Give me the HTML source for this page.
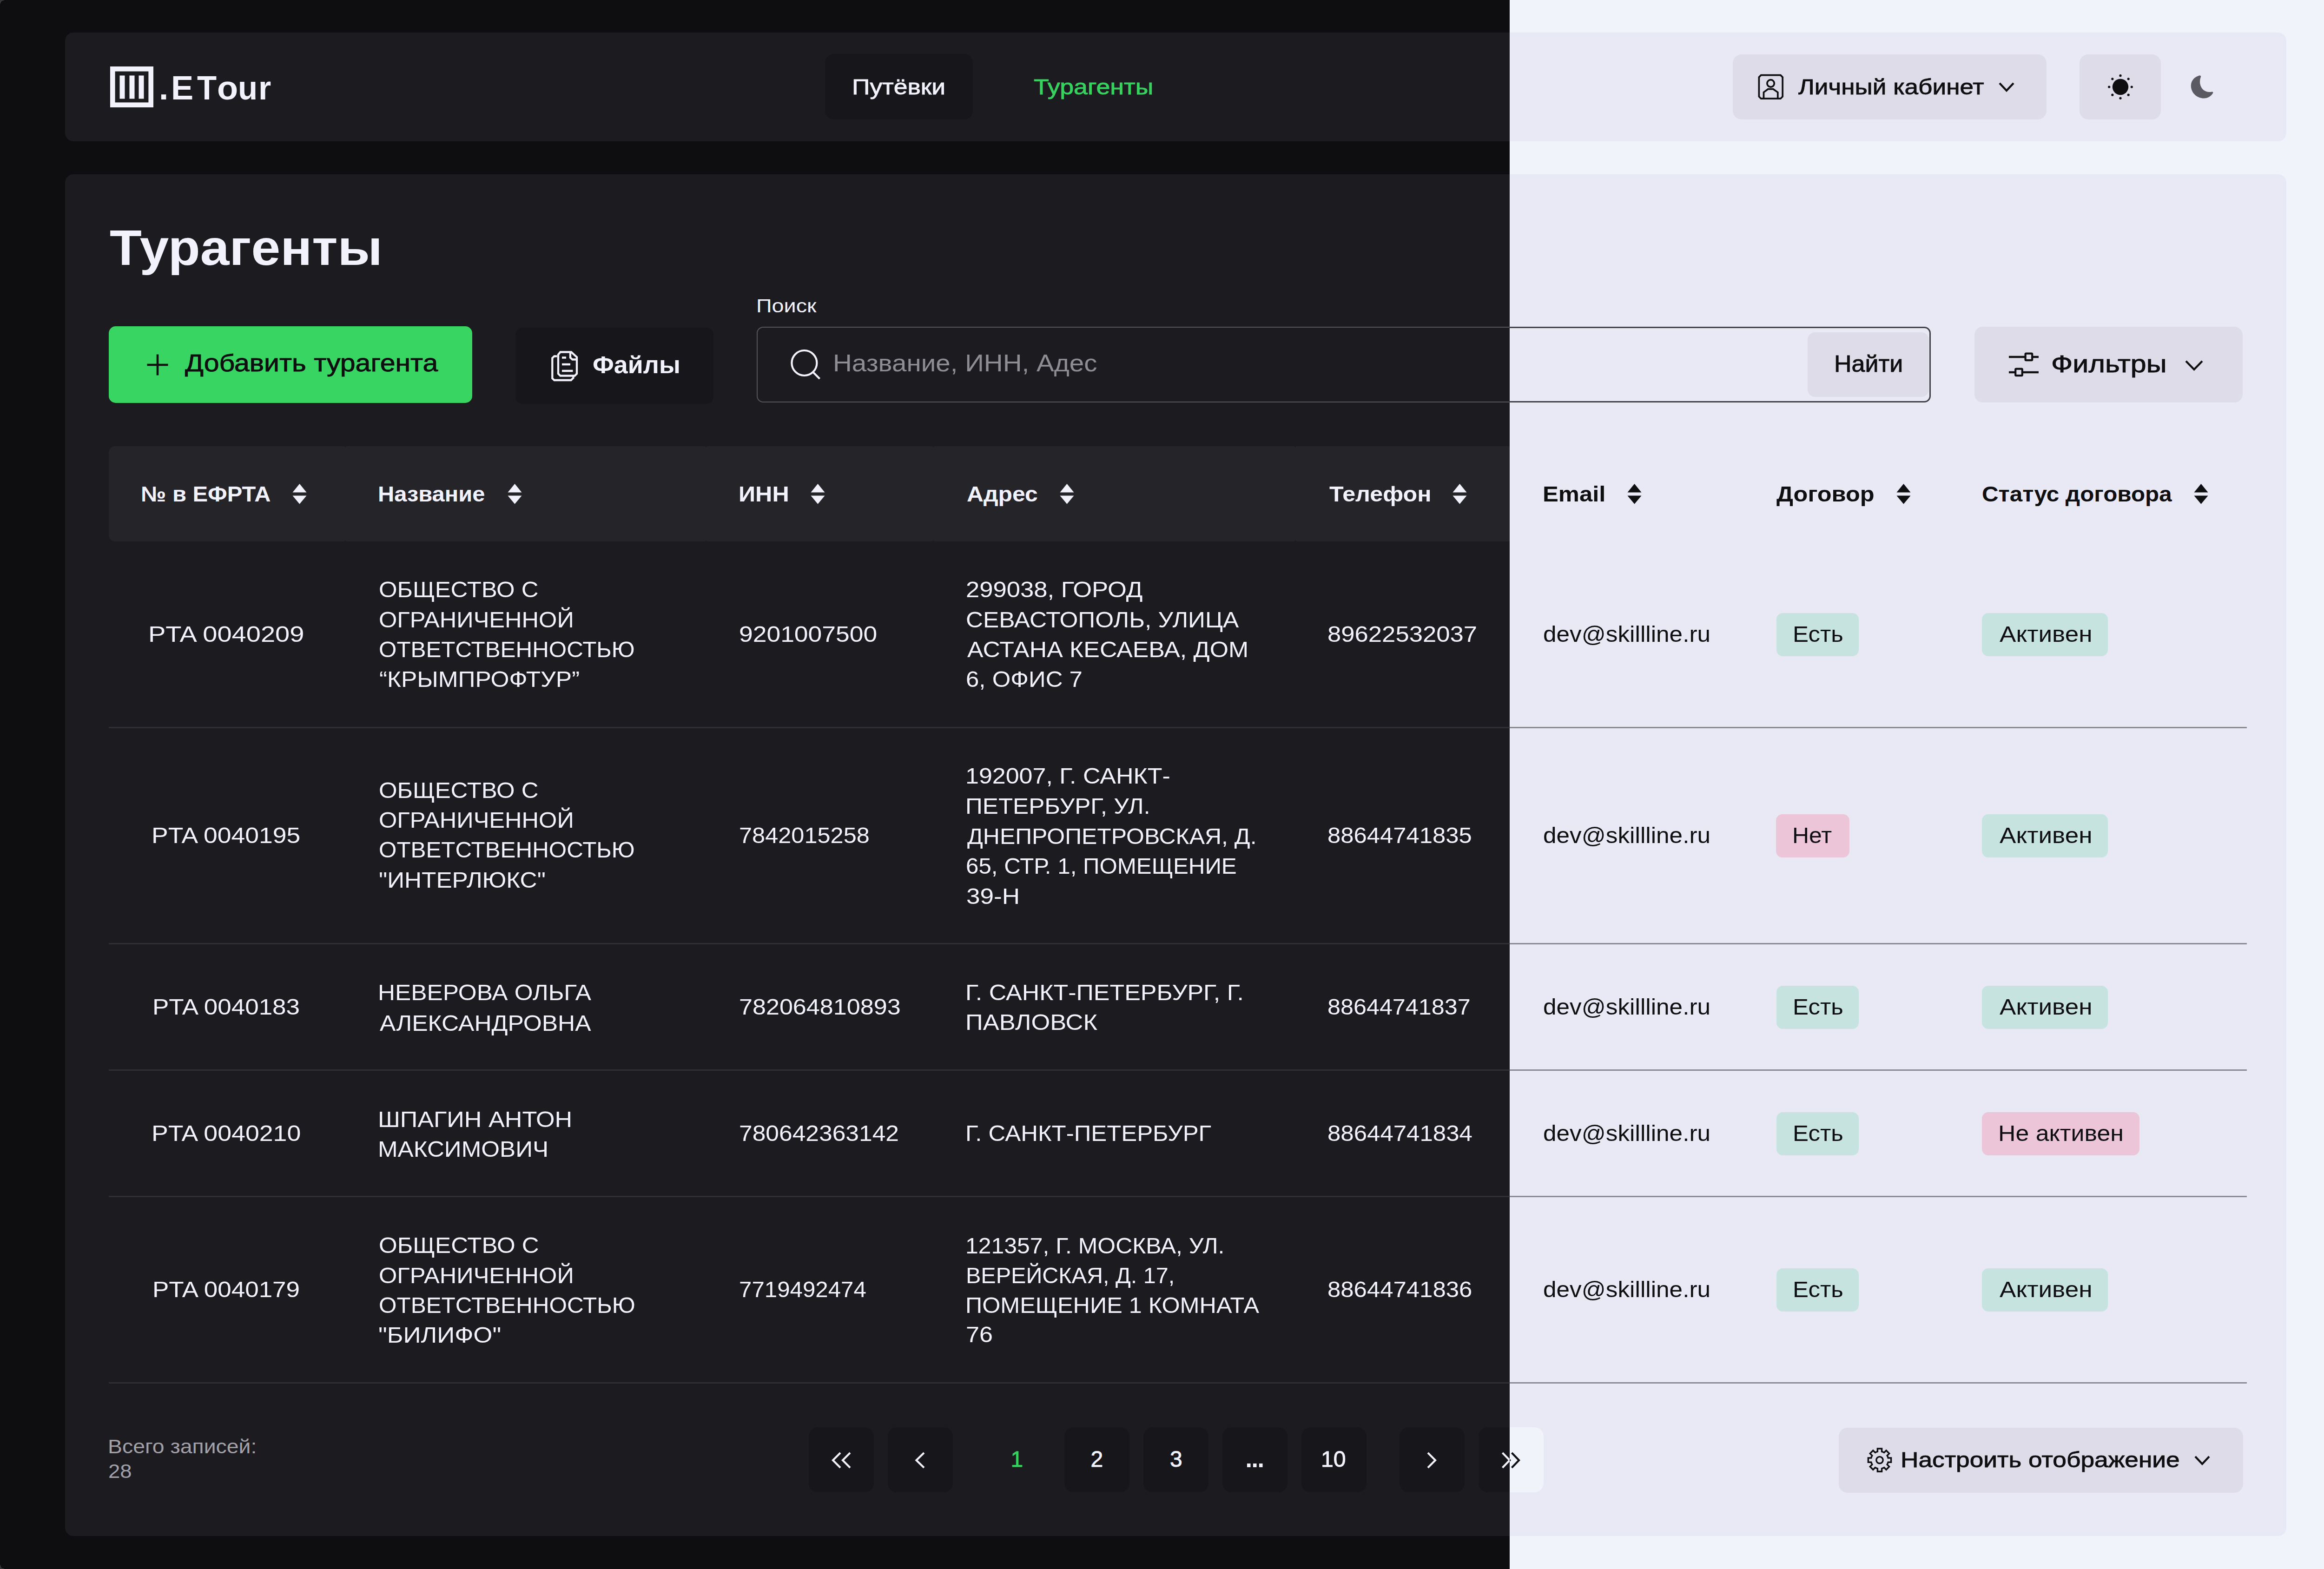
<!DOCTYPE html>
<html lang="ru"><head><meta charset="utf-8"><title>Турагенты</title>
<style>
*{margin:0;padding:0;box-sizing:content-box}
html,body{width:5060px;height:3376px;overflow:hidden;background:#333437}
.layer{position:absolute;left:0;top:0;width:5060px;height:3376px;background:var(--page);border-radius:9px;overflow:hidden;font-family:"Liberation Sans",sans-serif}
.t{position:absolute;white-space:pre;line-height:1;transform-origin:0 0;font-family:"Liberation Sans",sans-serif}
.r{position:absolute;display:block}
.dark{--ibw:2.4px;--page:#0e0e10;--card:#1c1b20;--btn:#17161b;--btn2:#17161b;--thead:#252429;--fg:#f1f2fb;--muted:#a2a1a8;--ph:#8e8d94;--div:#2f2e34;--inputborder:#56555c;--green:#38d15f;--greenbtn:#38d562;--ontext:#0e0e10;--pgbtn:#17161b;--okbg:#1f3b37;--nobg:#3b1f2c;--moon:#5b5a61}
.light{--ibw:3px;--page:#f1f3fb;--card:#e9e8f5;--btn:#dddce8;--btn2:#dddce8;--thead:transparent;--fg:#0f0f12;--muted:#6c6b72;--ph:#8e8d94;--div:#8b8a92;--inputborder:#403f46;--green:#2fb552;--greenbtn:#38d562;--ontext:#0e0e10;--pgbtn:#f1f3fb;--okbg:#c7e3e0;--nobg:#ecc5d8;--moon:#5b5a61}
</style></head>
<body>
<div class="layer light">
<div class='r' style='left:140px;top:70px;width:4779px;height:234px;background:var(--card);border-radius:18px;'></div>
<svg class='r' style='left:237px;top:143px;' width='94' height='89' viewBox='0 0 94 89'><rect x='5.3' y='5.3' width='82.4' height='77.4' fill='none' stroke='var(--fg)' stroke-width='10.6'/><rect x='20.5' y='19.5' width='11' height='50' fill='var(--fg)'/><rect x='41.5' y='19.5' width='11' height='50' fill='var(--fg)'/><rect x='61.5' y='19.5' width='11' height='50' fill='var(--fg)'/></svg>
<div class='t' style='left:342.0px;top:152.2px;font-size:73px;font-weight:700;color:var(--fg);'>.</div>
<div class='t' style='left:368.0px;top:152.2px;font-size:73px;font-weight:700;color:var(--fg);transform:scaleX(0.9881);'>E</div>
<div class='t' style='left:424.0px;top:152.2px;font-size:73px;font-weight:700;color:var(--fg);transform:scaleX(0.9432);'>T</div>
<div class='t' style='left:466.5px;top:152.2px;font-size:73px;font-weight:700;color:var(--fg);transform:scaleX(1.0125);'>o</div>
<div class='t' style='left:512.2px;top:152.2px;font-size:73px;font-weight:700;color:var(--fg);transform:scaleX(0.9444);'>u</div>
<div class='t' style='left:556.2px;top:152.2px;font-size:73px;font-weight:700;color:var(--fg);transform:scaleX(0.9583);'>r</div>
<div class='r' style='left:1775px;top:116px;width:318px;height:141px;background:var(--btn);border-radius:19px;'></div>
<div class='t' style='left:1832.6px;top:163.2px;font-size:47px;font-weight:400;color:var(--fg);-webkit-text-stroke:0.9px var(--fg);transform:scaleX(1.1380);'>Путёвки</div>
<div class='t' style='left:2223.9px;top:163.2px;font-size:47px;font-weight:400;color:var(--green);-webkit-text-stroke:0.9px var(--green);transform:scaleX(1.1445);'>Турагенты</div>
<div class='r' style='left:3728px;top:117px;width:675px;height:140px;background:var(--btn2);border-radius:19px;'></div>
<svg class='r' style='left:3770px;top:145px;' width='80' height='80' viewBox='0 0 80 80'><path d='M18.8 16.7 L60.8 16.7 L65.2 21.1 L65.2 62.8 L60.8 67.2 L18.8 67.2 L14.4 62.8 L14.4 21.1 Z' fill='none' stroke='var(--fg)' stroke-width='3.7'/><circle cx='39.6' cy='34.4' r='7.7' fill='none' stroke='var(--fg)' stroke-width='3.7'/><path d='M24.5 66 L24.5 53.6 L33.9 46.7 L44.9 46.7 L54.8 53.6 L54.8 66' fill='none' stroke='var(--fg)' stroke-width='3.7'/></svg>
<div class='t' style='left:3869.0px;top:163.2px;font-size:47px;font-weight:400;color:var(--fg);-webkit-text-stroke:0.9px var(--fg);transform:scaleX(1.1301);'>Личный кабинет</div>
<svg class='r' style='left:4300px;top:177px;' width='34' height='21' viewBox='0 0 34 21'><path d='M2 2 L17.0 18 L32 2' fill='none' stroke='var(--fg)' stroke-width='4.2' stroke-linecap='butt' stroke-linejoin='miter'/></svg>
<div class='r' style='left:4474px;top:117px;width:175px;height:140px;background:var(--btn2);border-radius:19px;'></div>
<svg class='r' style='left:4518px;top:143px;' width='88' height='88' viewBox='0 0 88 88'><circle cx='44' cy='44' r='17.2' fill='var(--fg)'/><circle cx='68.30' cy='44.00' r='2.6' fill='var(--fg)'/><circle cx='61.18' cy='61.18' r='2.6' fill='var(--fg)'/><circle cx='44.00' cy='68.30' r='2.6' fill='var(--fg)'/><circle cx='26.82' cy='61.18' r='2.6' fill='var(--fg)'/><circle cx='19.70' cy='44.00' r='2.6' fill='var(--fg)'/><circle cx='26.82' cy='26.82' r='2.6' fill='var(--fg)'/><circle cx='44.00' cy='19.70' r='2.6' fill='var(--fg)'/><circle cx='61.18' cy='26.82' r='2.6' fill='var(--fg)'/></svg>
<svg class='r' style='left:4706px;top:155px;' width='64' height='64' viewBox='0 0 64 64'><path d='M 24.5 8 C 12 12 6.5 22 8 33 C 10 47 22 56.5 35.5 56.5 C 44 56.5 51 52 55 45.5 C 56 43.5 55 42 52.5 42.5 C 40 45 30 38 27.5 26 C 26.5 20 27.5 14 29 10.5 C 30 8 27.5 7 24.5 8 Z' fill='var(--moon)'/></svg>
<div class='r' style='left:140px;top:375px;width:4779px;height:2930px;background:var(--card);border-radius:18px;'></div>
<div class='t' style='left:235.9px;top:479.9px;font-size:107px;font-weight:700;color:var(--fg);transform:scaleX(1.0541);'>Турагенты</div>
<div class='r' style='left:234px;top:702px;width:782px;height:165px;background:var(--greenbtn);border-radius:15px;'></div>
<svg class='r' style='left:314px;top:760px;' width='50' height='50' viewBox='0 0 50 50'><path d='M25 2.5 V47.5 M2.5 25 H47.5' stroke='var(--ontext)' stroke-width='4.6'/></svg>
<div class='t' style='left:398.0px;top:756.3px;font-size:51px;font-weight:400;color:var(--ontext);-webkit-text-stroke:0.9px var(--ontext);transform:scaleX(1.1573);'>Добавить турагента</div>
<div class='r' style='left:1109px;top:705px;width:426px;height:164px;background:var(--btn);border-radius:15px;'></div>
<svg class='r' style='left:1170px;top:740px;' width='90' height='90' viewBox='0 0 90 90'><path d='M31 23 L35.5 17.5 L59 17.5 L71 28.5 L71 64 L66.5 68.5 L35.5 68.5 L31 64 Z' fill='none' stroke='var(--fg)' stroke-width='4.3' stroke-linejoin='miter'/><path d='M57 17.5 L57 29.5 L61.5 33.5 L71 33.5' fill='none' stroke='var(--fg)' stroke-width='4.3'/><path d='M39 29.5 H48 M39 44 H57 M39 58 H62.5' stroke='var(--fg)' stroke-width='4.3'/><path d='M28.5 26.5 L22.5 26.5 L18.3 30.5 L18.3 74 L22.5 78 L58.5 78 L63.5 73 L63.5 69' fill='none' stroke='var(--fg)' stroke-width='4.3'/></svg>
<div class='t' style='left:1274.9px;top:759.8px;font-size:51px;font-weight:700;color:var(--fg);transform:scaleX(1.0536);'>Файлы</div>
<div class='t' style='left:1626.5px;top:637.6px;font-size:40px;font-weight:400;color:var(--fg);transform:scaleX(1.1685);'>Поиск</div>
<div class='r' style='left:1628px;top:703px;width:2526px;height:163px;background:transparent;border-radius:14px;box-sizing:border-box;border:var(--ibw) solid var(--inputborder);'></div>
<svg class='r' style='left:1695px;top:745px;' width='80' height='80' viewBox='0 0 80 80'><circle cx='35.4' cy='36' r='27' fill='none' stroke='var(--fg)' stroke-width='4.2'/><path d='M54.5 56 L68.5 70' stroke='var(--fg)' stroke-width='4.2'/></svg>
<div class='t' style='left:1791.6px;top:755.2px;font-size:52px;font-weight:400;color:var(--ph);transform:scaleX(1.0877);'>Название, ИНН, Адес</div>
<div class='r' style='left:3889px;top:715px;width:261px;height:139px;background:var(--btn2);border-radius:16px;'></div>
<div class='t' style='left:3945.8px;top:758.4px;font-size:50px;font-weight:400;color:var(--fg);-webkit-text-stroke:0.9px var(--fg);transform:scaleX(1.0387);'>Найти</div>
<div class='r' style='left:4248px;top:703px;width:577px;height:163px;background:var(--btn2);border-radius:18px;'></div>
<svg class='r' style='left:4310px;top:740px;' width='90' height='90' viewBox='0 0 90 90'><path d='M12 28 H47 M63 28 H76 M12 61 H25 M42 61 H76' stroke='var(--fg)' stroke-width='4.4'/><rect x='47.6' y='20.6' width='14.6' height='14.6' rx='1.5' fill='none' stroke='var(--fg)' stroke-width='4.2'/><rect x='26.2' y='53.6' width='14.6' height='14.6' rx='1.5' fill='none' stroke='var(--fg)' stroke-width='4.2'/></svg>
<div class='t' style='left:4412.6px;top:757.5px;font-size:51px;font-weight:400;color:var(--fg);-webkit-text-stroke:0.9px var(--fg);transform:scaleX(1.1951);'>Фильтры</div>
<svg class='r' style='left:4701px;top:775px;' width='39' height='23' viewBox='0 0 39 23'><path d='M2 2 L19.5 20 L37 2' fill='none' stroke='var(--fg)' stroke-width='4.2' stroke-linecap='butt' stroke-linejoin='miter'/></svg>
<div class='r' style='left:234px;top:960px;width:509px;height:205px;background:var(--thead);border-radius:14px 4px 4px 14px'></div>
<div class='r' style='left:743px;top:960px;width:776px;height:205px;background:var(--thead);border-radius:4px'></div>
<div class='r' style='left:1519px;top:960px;width:489px;height:205px;background:var(--thead);border-radius:4px'></div>
<div class='r' style='left:2008px;top:960px;width:779px;height:205px;background:var(--thead);border-radius:4px'></div>
<div class='r' style='left:2787px;top:960px;width:462px;height:205px;background:var(--thead);border-radius:4px'></div>
<div class='r' style='left:3249px;top:960px;width:500px;height:205px;background:var(--thead);border-radius:4px'></div>
<div class='r' style='left:3749px;top:960px;width:443px;height:205px;background:var(--thead);border-radius:4px'></div>
<div class='r' style='left:4192px;top:960px;width:642px;height:205px;background:var(--thead);border-radius:4px'></div>
<div class='t' style='left:302.8px;top:1039.6px;font-size:46px;font-weight:700;color:var(--fg);transform:scaleX(1.0604);'>№ в ЕФРТА</div>
<svg class='r' style='left:629px;top:1041px;' width='31' height='44' viewBox='0 0 31 44'><path d='M15.5 0 L30.5 18.5 L0.5 18.5 Z' fill='var(--fg)'/><path d='M0.5 25.5 L30.5 25.5 L15.5 43.5 Z' fill='var(--fg)'/></svg>
<div class='t' style='left:813.4px;top:1039.6px;font-size:46px;font-weight:700;color:var(--fg);transform:scaleX(1.0611);'>Название</div>
<svg class='r' style='left:1092px;top:1041px;' width='31' height='44' viewBox='0 0 31 44'><path d='M15.5 0 L30.5 18.5 L0.5 18.5 Z' fill='var(--fg)'/><path d='M0.5 25.5 L30.5 25.5 L15.5 43.5 Z' fill='var(--fg)'/></svg>
<div class='t' style='left:1588.7px;top:1039.6px;font-size:46px;font-weight:700;color:var(--fg);transform:scaleX(1.0925);'>ИНН</div>
<svg class='r' style='left:1743.6px;top:1041px;' width='31' height='44' viewBox='0 0 31 44'><path d='M15.5 0 L30.5 18.5 L0.5 18.5 Z' fill='var(--fg)'/><path d='M0.5 25.5 L30.5 25.5 L15.5 43.5 Z' fill='var(--fg)'/></svg>
<div class='t' style='left:2079.5px;top:1039.6px;font-size:46px;font-weight:700;color:var(--fg);transform:scaleX(1.0825);'>Адрес</div>
<svg class='r' style='left:2279.7px;top:1041px;' width='31' height='44' viewBox='0 0 31 44'><path d='M15.5 0 L30.5 18.5 L0.5 18.5 Z' fill='var(--fg)'/><path d='M0.5 25.5 L30.5 25.5 L15.5 43.5 Z' fill='var(--fg)'/></svg>
<div class='t' style='left:2859.5px;top:1039.6px;font-size:46px;font-weight:700;color:var(--fg);transform:scaleX(1.0916);'>Телефон</div>
<svg class='r' style='left:3125px;top:1041px;' width='31' height='44' viewBox='0 0 31 44'><path d='M15.5 0 L30.5 18.5 L0.5 18.5 Z' fill='var(--fg)'/><path d='M0.5 25.5 L30.5 25.5 L15.5 43.5 Z' fill='var(--fg)'/></svg>
<div class='t' style='left:3318.7px;top:1039.6px;font-size:46px;font-weight:700;color:var(--fg);transform:scaleX(1.1031);'>Email</div>
<svg class='r' style='left:3500.5px;top:1041px;' width='31' height='44' viewBox='0 0 31 44'><path d='M15.5 0 L30.5 18.5 L0.5 18.5 Z' fill='var(--fg)'/><path d='M0.5 25.5 L30.5 25.5 L15.5 43.5 Z' fill='var(--fg)'/></svg>
<div class='t' style='left:3821.6px;top:1039.6px;font-size:46px;font-weight:700;color:var(--fg);transform:scaleX(1.0972);'>Договор</div>
<svg class='r' style='left:4080px;top:1041px;' width='31' height='44' viewBox='0 0 31 44'><path d='M15.5 0 L30.5 18.5 L0.5 18.5 Z' fill='var(--fg)'/><path d='M0.5 25.5 L30.5 25.5 L15.5 43.5 Z' fill='var(--fg)'/></svg>
<div class='t' style='left:4263.9px;top:1039.6px;font-size:46px;font-weight:700;color:var(--fg);transform:scaleX(1.0719);'>Статус договора</div>
<svg class='r' style='left:4720px;top:1041px;' width='31' height='44' viewBox='0 0 31 44'><path d='M15.5 0 L30.5 18.5 L0.5 18.5 Z' fill='var(--fg)'/><path d='M0.5 25.5 L30.5 25.5 L15.5 43.5 Z' fill='var(--fg)'/></svg>
<div class='r' style='left:234px;top:1563.5px;width:4600px;height:3px;background:var(--div);border-radius:0px;'></div>
<div class='r' style='left:234px;top:2028.5px;width:4600px;height:3px;background:var(--div);border-radius:0px;'></div>
<div class='r' style='left:234px;top:2301.0px;width:4600px;height:3px;background:var(--div);border-radius:0px;'></div>
<div class='r' style='left:234px;top:2573.0px;width:4600px;height:3px;background:var(--div);border-radius:0px;'></div>
<div class='r' style='left:234px;top:2974.0px;width:4600px;height:3px;background:var(--div);border-radius:0px;'></div>
<div class='t' style='left:318.5px;top:1340.6px;font-size:48px;font-weight:400;color:var(--fg);transform:scaleX(1.1672);'>PTA 0040209</div>
<div class='t' style='left:814.5px;top:1245.4px;font-size:48px;font-weight:400;color:var(--fg);transform:scaleX(1.0601);'>ОБЩЕСТВО С</div>
<div class='t' style='left:814.5px;top:1310.0px;font-size:48px;font-weight:400;color:var(--fg);transform:scaleX(1.0535);'>ОГРАНИЧЕННОЙ</div>
<div class='t' style='left:814.5px;top:1374.4px;font-size:48px;font-weight:400;color:var(--fg);transform:scaleX(1.0282);'>ОТВЕТСТВЕННОСТЬЮ</div>
<div class='t' style='left:815.5px;top:1438.1px;font-size:48px;font-weight:400;color:var(--fg);transform:scaleX(1.0702);'>“КРЫМПРОФТУР”</div>
<div class='t' style='left:1589.8px;top:1340.6px;font-size:48px;font-weight:400;color:var(--fg);transform:scaleX(1.1130);'>9201007500</div>
<div class='t' style='left:2078.3px;top:1244.8px;font-size:48px;font-weight:400;color:var(--fg);transform:scaleX(1.0954);'>299038, ГОРОД</div>
<div class='t' style='left:2078.4px;top:1309.9px;font-size:48px;font-weight:400;color:var(--fg);transform:scaleX(1.0695);'>СЕВАСТОПОЛЬ, УЛИЦА</div>
<div class='t' style='left:2080.5px;top:1374.2px;font-size:48px;font-weight:400;color:var(--fg);transform:scaleX(1.0801);'>АСТАНА КЕСАЕВА, ДОМ</div>
<div class='t' style='left:2078.4px;top:1437.9px;font-size:48px;font-weight:400;color:var(--fg);transform:scaleX(1.0615);'>6, ОФИС 7</div>
<div class='t' style='left:2856.3px;top:1340.6px;font-size:48px;font-weight:400;color:var(--fg);transform:scaleX(1.0967);'>89622532037</div>
<div class='t' style='left:3319.9px;top:1340.6px;font-size:48px;font-weight:400;color:var(--fg);transform:scaleX(1.0688);'>dev@skillline.ru</div>
<div class='r' style='left:3822px;top:1318.7px;width:177px;height:93px;background:var(--okbg);border-radius:14px;'></div>
<div class='t' style='left:3856.8px;top:1340.6px;font-size:48px;font-weight:400;color:var(--fg);transform:scaleX(1.0624);'>Есть</div>
<div class='r' style='left:4264px;top:1318.7px;width:271px;height:93px;background:var(--okbg);border-radius:14px;'></div>
<div class='t' style='left:4302.0px;top:1340.6px;font-size:48px;font-weight:400;color:var(--fg);transform:scaleX(1.1050);'>Активен</div>
<div class='t' style='left:326.2px;top:1773.6px;font-size:48px;font-weight:400;color:var(--fg);transform:scaleX(1.1146);'>PTA 0040195</div>
<div class='t' style='left:814.5px;top:1677.3px;font-size:48px;font-weight:400;color:var(--fg);transform:scaleX(1.0601);'>ОБЩЕСТВО С</div>
<div class='t' style='left:814.5px;top:1741.0px;font-size:48px;font-weight:400;color:var(--fg);transform:scaleX(1.0535);'>ОГРАНИЧЕННОЙ</div>
<div class='t' style='left:814.5px;top:1805.4px;font-size:48px;font-weight:400;color:var(--fg);transform:scaleX(1.0282);'>ОТВЕТСТВЕННОСТЬЮ</div>
<div class='t' style='left:814.5px;top:1869.7px;font-size:48px;font-weight:400;color:var(--fg);transform:scaleX(1.0680);'>&quot;ИНТЕРЛЮКС&quot;</div>
<div class='t' style='left:1589.9px;top:1773.6px;font-size:48px;font-weight:400;color:var(--fg);transform:scaleX(1.0522);'>7842015258</div>
<div class='t' style='left:2077.3px;top:1646.2px;font-size:48px;font-weight:400;color:var(--fg);transform:scaleX(1.0827);'>192007, Г. САНКТ-</div>
<div class='t' style='left:2077.3px;top:1710.9px;font-size:48px;font-weight:400;color:var(--fg);transform:scaleX(1.0656);'>ПЕТЕРБУРГ, УЛ.</div>
<div class='t' style='left:2080.5px;top:1775.7px;font-size:48px;font-weight:400;color:var(--fg);transform:scaleX(1.0404);'>ДНЕПРОПЕТРОВСКАЯ, Д.</div>
<div class='t' style='left:2078.4px;top:1840.4px;font-size:48px;font-weight:400;color:var(--fg);transform:scaleX(1.0269);'>65, СТР. 1, ПОМЕЩЕНИЕ</div>
<div class='t' style='left:2079.4px;top:1905.2px;font-size:48px;font-weight:400;color:var(--fg);transform:scaleX(1.1069);'>39-Н</div>
<div class='t' style='left:2856.4px;top:1773.6px;font-size:48px;font-weight:400;color:var(--fg);transform:scaleX(1.0578);'>88644741835</div>
<div class='t' style='left:3319.9px;top:1773.6px;font-size:48px;font-weight:400;color:var(--fg);transform:scaleX(1.0688);'>dev@skillline.ru</div>
<div class='r' style='left:3821px;top:1751.7px;width:158px;height:93px;background:var(--nobg);border-radius:14px;'></div>
<div class='t' style='left:3855.9px;top:1773.6px;font-size:48px;font-weight:400;color:var(--fg);transform:scaleX(1.0411);'>Нет</div>
<div class='r' style='left:4264px;top:1751.7px;width:271px;height:93px;background:var(--okbg);border-radius:14px;'></div>
<div class='t' style='left:4302.0px;top:1773.6px;font-size:48px;font-weight:400;color:var(--fg);transform:scaleX(1.1050);'>Активен</div>
<div class='t' style='left:327.8px;top:2142.6px;font-size:48px;font-weight:400;color:var(--fg);transform:scaleX(1.1031);'>PTA 0040183</div>
<div class='t' style='left:813.4px;top:2111.9px;font-size:48px;font-weight:400;color:var(--fg);transform:scaleX(1.0688);'>НЕВЕРОВА ОЛЬГА</div>
<div class='t' style='left:816.6px;top:2177.7px;font-size:48px;font-weight:400;color:var(--fg);transform:scaleX(1.0725);'>АЛЕКСАНДРОВНА</div>
<div class='t' style='left:1589.8px;top:2142.6px;font-size:48px;font-weight:400;color:var(--fg);transform:scaleX(1.0851);'>782064810893</div>
<div class='t' style='left:2077.3px;top:2112.4px;font-size:48px;font-weight:400;color:var(--fg);transform:scaleX(1.0823);'>Г. САНКТ-ПЕТЕРБУРГ, Г.</div>
<div class='t' style='left:2077.2px;top:2176.0px;font-size:48px;font-weight:400;color:var(--fg);transform:scaleX(1.0926);'>ПАВЛОВСК</div>
<div class='t' style='left:2856.4px;top:2142.6px;font-size:48px;font-weight:400;color:var(--fg);transform:scaleX(1.0478);'>88644741837</div>
<div class='t' style='left:3319.9px;top:2142.6px;font-size:48px;font-weight:400;color:var(--fg);transform:scaleX(1.0688);'>dev@skillline.ru</div>
<div class='r' style='left:3822px;top:2120.7px;width:177px;height:93px;background:var(--okbg);border-radius:14px;'></div>
<div class='t' style='left:3856.8px;top:2142.6px;font-size:48px;font-weight:400;color:var(--fg);transform:scaleX(1.0624);'>Есть</div>
<div class='r' style='left:4264px;top:2120.7px;width:271px;height:93px;background:var(--okbg);border-radius:14px;'></div>
<div class='t' style='left:4302.0px;top:2142.6px;font-size:48px;font-weight:400;color:var(--fg);transform:scaleX(1.1050);'>Активен</div>
<div class='t' style='left:325.6px;top:2414.9px;font-size:48px;font-weight:400;color:var(--fg);transform:scaleX(1.1181);'>PTA 0040210</div>
<div class='t' style='left:813.3px;top:2385.1px;font-size:48px;font-weight:400;color:var(--fg);transform:scaleX(1.0868);'>ШПАГИН АНТОН</div>
<div class='t' style='left:813.4px;top:2449.0px;font-size:48px;font-weight:400;color:var(--fg);transform:scaleX(1.0655);'>МАКСИМОВИЧ</div>
<div class='t' style='left:1589.9px;top:2414.9px;font-size:48px;font-weight:400;color:var(--fg);transform:scaleX(1.0737);'>780642363142</div>
<div class='t' style='left:2077.3px;top:2414.7px;font-size:48px;font-weight:400;color:var(--fg);transform:scaleX(1.0602);'>Г. САНКТ-ПЕТЕРБУРГ</div>
<div class='t' style='left:2856.4px;top:2414.9px;font-size:48px;font-weight:400;color:var(--fg);transform:scaleX(1.0620);'>88644741834</div>
<div class='t' style='left:3319.9px;top:2414.9px;font-size:48px;font-weight:400;color:var(--fg);transform:scaleX(1.0688);'>dev@skillline.ru</div>
<div class='r' style='left:3822px;top:2393.0px;width:177px;height:93px;background:var(--okbg);border-radius:14px;'></div>
<div class='t' style='left:3856.8px;top:2414.9px;font-size:48px;font-weight:400;color:var(--fg);transform:scaleX(1.0624);'>Есть</div>
<div class='r' style='left:4264px;top:2393.0px;width:339px;height:93px;background:var(--nobg);border-radius:14px;'></div>
<div class='t' style='left:4298.8px;top:2414.9px;font-size:48px;font-weight:400;color:var(--fg);transform:scaleX(1.0803);'>Не активен</div>
<div class='t' style='left:327.8px;top:2751.2px;font-size:48px;font-weight:400;color:var(--fg);transform:scaleX(1.1031);'>PTA 0040179</div>
<div class='t' style='left:814.5px;top:2655.8px;font-size:48px;font-weight:400;color:var(--fg);transform:scaleX(1.0639);'>ОБЩЕСТВО С</div>
<div class='t' style='left:814.5px;top:2720.9px;font-size:48px;font-weight:400;color:var(--fg);transform:scaleX(1.0535);'>ОГРАНИЧЕННОЙ</div>
<div class='t' style='left:814.5px;top:2784.7px;font-size:48px;font-weight:400;color:var(--fg);transform:scaleX(1.0301);'>ОТВЕТСТВЕННОСТЬЮ</div>
<div class='t' style='left:814.4px;top:2848.5px;font-size:48px;font-weight:400;color:var(--fg);transform:scaleX(1.1015);'>&quot;БИЛИФО&quot;</div>
<div class='t' style='left:1589.9px;top:2751.2px;font-size:48px;font-weight:400;color:var(--fg);transform:scaleX(1.0255);'>7719492474</div>
<div class='t' style='left:2077.4px;top:2657.4px;font-size:48px;font-weight:400;color:var(--fg);transform:scaleX(1.0391);'>121357, Г. МОСКВА, УЛ.</div>
<div class='t' style='left:2077.5px;top:2721.1px;font-size:48px;font-weight:400;color:var(--fg);transform:scaleX(1.0105);'>ВЕРЕЙСКАЯ, Д. 17,</div>
<div class='t' style='left:2077.4px;top:2784.8px;font-size:48px;font-weight:400;color:var(--fg);transform:scaleX(1.0487);'>ПОМЕЩЕНИЕ 1 КОМНАТА</div>
<div class='t' style='left:2078.3px;top:2848.4px;font-size:48px;font-weight:400;color:var(--fg);transform:scaleX(1.0866);'>76</div>
<div class='t' style='left:2856.4px;top:2751.2px;font-size:48px;font-weight:400;color:var(--fg);transform:scaleX(1.0602);'>88644741836</div>
<div class='t' style='left:3319.9px;top:2751.2px;font-size:48px;font-weight:400;color:var(--fg);transform:scaleX(1.0688);'>dev@skillline.ru</div>
<div class='r' style='left:3822px;top:2729.3px;width:177px;height:93px;background:var(--okbg);border-radius:14px;'></div>
<div class='t' style='left:3856.8px;top:2751.2px;font-size:48px;font-weight:400;color:var(--fg);transform:scaleX(1.0624);'>Есть</div>
<div class='r' style='left:4264px;top:2729.3px;width:271px;height:93px;background:var(--okbg);border-radius:14px;'></div>
<div class='t' style='left:4302.0px;top:2751.2px;font-size:48px;font-weight:400;color:var(--fg);transform:scaleX(1.1050);'>Активен</div>
<div class='t' style='left:231.7px;top:3092.4px;font-size:42px;font-weight:400;color:var(--muted);transform:scaleX(1.1043);'>Всего записей:</div>
<div class='t' style='left:232.8px;top:3144.8px;font-size:42px;font-weight:400;color:var(--muted);transform:scaleX(1.0840);'>28</div>
<div class='r' style='left:1740px;top:3071px;width:140px;height:140px;background:var(--pgbtn);border-radius:20px;'></div>
<div class='r' style='left:1910px;top:3071px;width:140px;height:140px;background:var(--pgbtn);border-radius:20px;'></div>
<div class='r' style='left:2290px;top:3071px;width:140px;height:140px;background:var(--pgbtn);border-radius:20px;'></div>
<div class='r' style='left:2460px;top:3071px;width:140px;height:140px;background:var(--pgbtn);border-radius:20px;'></div>
<div class='r' style='left:2630px;top:3071px;width:140px;height:140px;background:var(--pgbtn);border-radius:20px;'></div>
<div class='r' style='left:2800px;top:3071px;width:140px;height:140px;background:var(--pgbtn);border-radius:20px;'></div>
<div class='r' style='left:3011px;top:3071px;width:140px;height:140px;background:var(--pgbtn);border-radius:20px;'></div>
<div class='r' style='left:3181px;top:3071px;width:140px;height:140px;background:var(--pgbtn);border-radius:20px;'></div>
<svg class='r' style='left:1740px;top:3071px;' width='140' height='140' viewBox='0 0 140 140'><path d='M68 55 L52 71 L68 87' fill='none' stroke='var(--fg)' stroke-width='4.2' stroke-linecap='butt'/><path d='M89 55 L73 71 L89 87' fill='none' stroke='var(--fg)' stroke-width='4.2' stroke-linecap='butt'/></svg>
<svg class='r' style='left:1910px;top:3071px;' width='140' height='140' viewBox='0 0 140 140'><path d='M78 55 L61.5 71 L78 87' fill='none' stroke='var(--fg)' stroke-width='4.2' stroke-linecap='butt'/></svg>
<div class='t' style='left:2174.5px;top:3116.4px;font-size:48px;font-weight:400;color:var(--green);-webkit-text-stroke:0.9px var(--green);'>1</div>
<div class='t' style='left:2346.5px;top:3116.4px;font-size:48px;font-weight:400;color:var(--fg);-webkit-text-stroke:0.9px var(--fg);'>2</div>
<div class='t' style='left:2517.0px;top:3116.4px;font-size:48px;font-weight:400;color:var(--fg);-webkit-text-stroke:0.9px var(--fg);'>3</div>
<svg class='r' style='left:2630px;top:3071px;' width='140' height='140' viewBox='0 0 140 140'><rect x='53' y='78' width='7.5' height='8' fill='var(--fg)'/><rect x='66' y='78' width='7.5' height='8' fill='var(--fg)'/><rect x='79' y='78' width='7.5' height='8' fill='var(--fg)'/></svg>
<div class='t' style='left:2841.5px;top:3116.4px;font-size:48px;font-weight:400;color:var(--fg);-webkit-text-stroke:0.9px var(--fg);transform:scaleX(1.0063);'>10</div>
<svg class='r' style='left:3011px;top:3071px;' width='140' height='140' viewBox='0 0 140 140'><path d='M61 55 L77 71 L61 87' fill='none' stroke='var(--fg)' stroke-width='4.2' stroke-linecap='butt'/></svg>
<svg class='r' style='left:3181px;top:3071px;' width='140' height='140' viewBox='0 0 140 140'><path d='M51.5 55 L67 71 L51.5 87' fill='none' stroke='var(--fg)' stroke-width='4.2' stroke-linecap='butt'/><path d='M71.5 55 L87 71 L71.5 87' fill='none' stroke='var(--fg)' stroke-width='4.2' stroke-linecap='butt'/></svg>
<div class='r' style='left:3956px;top:3072px;width:870px;height:140px;background:var(--btn2);border-radius:19px;'></div>
<svg class='r' style='left:4000px;top:3100px;' width='90' height='90' viewBox='0 0 90 90'><path d='M 39.40 23.37 L 39.40 17.00 L 48.60 17.00 L 48.60 23.37 A 18.8 18.8 0 0 1 53.64 25.46 L 58.14 20.95 L 64.65 27.46 L 60.14 31.96 A 18.8 18.8 0 0 1 62.23 37.00 L 68.60 37.00 L 68.60 46.20 L 62.23 46.20 A 18.8 18.8 0 0 1 60.14 51.24 L 64.65 55.74 L 58.14 62.25 L 53.64 57.74 A 18.8 18.8 0 0 1 48.60 59.83 L 48.60 66.20 L 39.40 66.20 L 39.40 59.83 A 18.8 18.8 0 0 1 34.36 57.74 L 29.86 62.25 L 23.35 55.74 L 27.86 51.24 A 18.8 18.8 0 0 1 25.77 46.20 L 19.40 46.20 L 19.40 37.00 L 25.77 37.00 A 18.8 18.8 0 0 1 27.86 31.96 L 23.35 27.46 L 29.86 20.95 L 34.36 25.46 A 18.8 18.8 0 0 1 39.40 23.37 Z' fill='none' stroke='var(--fg)' stroke-width='3.4' stroke-linejoin='miter'/><circle cx='44' cy='41.6' r='7.2' fill='none' stroke='var(--fg)' stroke-width='3.4'/></svg>
<div class='t' style='left:4089.1px;top:3117.4px;font-size:47px;font-weight:400;color:var(--fg);-webkit-text-stroke:0.9px var(--fg);transform:scaleX(1.1332);'>Настроить отображение</div>
<svg class='r' style='left:4721px;top:3132px;' width='34' height='21' viewBox='0 0 34 21'><path d='M2 2 L17.0 18 L32 2' fill='none' stroke='var(--fg)' stroke-width='4.2' stroke-linecap='butt' stroke-linejoin='miter'/></svg>
</div>
<div class="layer dark" style="clip-path:inset(0 1812px 0 0);border-radius:9px 0 0 9px">
<div class='r' style='left:140px;top:70px;width:4779px;height:234px;background:var(--card);border-radius:18px;'></div>
<svg class='r' style='left:237px;top:143px;' width='94' height='89' viewBox='0 0 94 89'><rect x='5.3' y='5.3' width='82.4' height='77.4' fill='none' stroke='var(--fg)' stroke-width='10.6'/><rect x='20.5' y='19.5' width='11' height='50' fill='var(--fg)'/><rect x='41.5' y='19.5' width='11' height='50' fill='var(--fg)'/><rect x='61.5' y='19.5' width='11' height='50' fill='var(--fg)'/></svg>
<div class='t' style='left:342.0px;top:152.2px;font-size:73px;font-weight:700;color:var(--fg);'>.</div>
<div class='t' style='left:368.0px;top:152.2px;font-size:73px;font-weight:700;color:var(--fg);transform:scaleX(0.9881);'>E</div>
<div class='t' style='left:424.0px;top:152.2px;font-size:73px;font-weight:700;color:var(--fg);transform:scaleX(0.9432);'>T</div>
<div class='t' style='left:466.5px;top:152.2px;font-size:73px;font-weight:700;color:var(--fg);transform:scaleX(1.0125);'>o</div>
<div class='t' style='left:512.2px;top:152.2px;font-size:73px;font-weight:700;color:var(--fg);transform:scaleX(0.9444);'>u</div>
<div class='t' style='left:556.2px;top:152.2px;font-size:73px;font-weight:700;color:var(--fg);transform:scaleX(0.9583);'>r</div>
<div class='r' style='left:1775px;top:116px;width:318px;height:141px;background:var(--btn);border-radius:19px;'></div>
<div class='t' style='left:1832.6px;top:163.2px;font-size:47px;font-weight:400;color:var(--fg);-webkit-text-stroke:0.9px var(--fg);transform:scaleX(1.1380);'>Путёвки</div>
<div class='t' style='left:2223.9px;top:163.2px;font-size:47px;font-weight:400;color:var(--green);-webkit-text-stroke:0.9px var(--green);transform:scaleX(1.1445);'>Турагенты</div>
<div class='r' style='left:3728px;top:117px;width:675px;height:140px;background:var(--btn2);border-radius:19px;'></div>
<svg class='r' style='left:3770px;top:145px;' width='80' height='80' viewBox='0 0 80 80'><path d='M18.8 16.7 L60.8 16.7 L65.2 21.1 L65.2 62.8 L60.8 67.2 L18.8 67.2 L14.4 62.8 L14.4 21.1 Z' fill='none' stroke='var(--fg)' stroke-width='3.7'/><circle cx='39.6' cy='34.4' r='7.7' fill='none' stroke='var(--fg)' stroke-width='3.7'/><path d='M24.5 66 L24.5 53.6 L33.9 46.7 L44.9 46.7 L54.8 53.6 L54.8 66' fill='none' stroke='var(--fg)' stroke-width='3.7'/></svg>
<div class='t' style='left:3869.0px;top:163.2px;font-size:47px;font-weight:400;color:var(--fg);-webkit-text-stroke:0.9px var(--fg);transform:scaleX(1.1301);'>Личный кабинет</div>
<svg class='r' style='left:4300px;top:177px;' width='34' height='21' viewBox='0 0 34 21'><path d='M2 2 L17.0 18 L32 2' fill='none' stroke='var(--fg)' stroke-width='4.2' stroke-linecap='butt' stroke-linejoin='miter'/></svg>
<div class='r' style='left:4474px;top:117px;width:175px;height:140px;background:var(--btn2);border-radius:19px;'></div>
<svg class='r' style='left:4518px;top:143px;' width='88' height='88' viewBox='0 0 88 88'><circle cx='44' cy='44' r='17.2' fill='var(--fg)'/><circle cx='68.30' cy='44.00' r='2.6' fill='var(--fg)'/><circle cx='61.18' cy='61.18' r='2.6' fill='var(--fg)'/><circle cx='44.00' cy='68.30' r='2.6' fill='var(--fg)'/><circle cx='26.82' cy='61.18' r='2.6' fill='var(--fg)'/><circle cx='19.70' cy='44.00' r='2.6' fill='var(--fg)'/><circle cx='26.82' cy='26.82' r='2.6' fill='var(--fg)'/><circle cx='44.00' cy='19.70' r='2.6' fill='var(--fg)'/><circle cx='61.18' cy='26.82' r='2.6' fill='var(--fg)'/></svg>
<svg class='r' style='left:4706px;top:155px;' width='64' height='64' viewBox='0 0 64 64'><path d='M 24.5 8 C 12 12 6.5 22 8 33 C 10 47 22 56.5 35.5 56.5 C 44 56.5 51 52 55 45.5 C 56 43.5 55 42 52.5 42.5 C 40 45 30 38 27.5 26 C 26.5 20 27.5 14 29 10.5 C 30 8 27.5 7 24.5 8 Z' fill='var(--moon)'/></svg>
<div class='r' style='left:140px;top:375px;width:4779px;height:2930px;background:var(--card);border-radius:18px;'></div>
<div class='t' style='left:235.9px;top:479.9px;font-size:107px;font-weight:700;color:var(--fg);transform:scaleX(1.0541);'>Турагенты</div>
<div class='r' style='left:234px;top:702px;width:782px;height:165px;background:var(--greenbtn);border-radius:15px;'></div>
<svg class='r' style='left:314px;top:760px;' width='50' height='50' viewBox='0 0 50 50'><path d='M25 2.5 V47.5 M2.5 25 H47.5' stroke='var(--ontext)' stroke-width='4.6'/></svg>
<div class='t' style='left:398.0px;top:756.3px;font-size:51px;font-weight:400;color:var(--ontext);-webkit-text-stroke:0.9px var(--ontext);transform:scaleX(1.1573);'>Добавить турагента</div>
<div class='r' style='left:1109px;top:705px;width:426px;height:164px;background:var(--btn);border-radius:15px;'></div>
<svg class='r' style='left:1170px;top:740px;' width='90' height='90' viewBox='0 0 90 90'><path d='M31 23 L35.5 17.5 L59 17.5 L71 28.5 L71 64 L66.5 68.5 L35.5 68.5 L31 64 Z' fill='none' stroke='var(--fg)' stroke-width='4.3' stroke-linejoin='miter'/><path d='M57 17.5 L57 29.5 L61.5 33.5 L71 33.5' fill='none' stroke='var(--fg)' stroke-width='4.3'/><path d='M39 29.5 H48 M39 44 H57 M39 58 H62.5' stroke='var(--fg)' stroke-width='4.3'/><path d='M28.5 26.5 L22.5 26.5 L18.3 30.5 L18.3 74 L22.5 78 L58.5 78 L63.5 73 L63.5 69' fill='none' stroke='var(--fg)' stroke-width='4.3'/></svg>
<div class='t' style='left:1274.9px;top:759.8px;font-size:51px;font-weight:700;color:var(--fg);transform:scaleX(1.0536);'>Файлы</div>
<div class='t' style='left:1626.5px;top:637.6px;font-size:40px;font-weight:400;color:var(--fg);transform:scaleX(1.1685);'>Поиск</div>
<div class='r' style='left:1628px;top:703px;width:2526px;height:163px;background:transparent;border-radius:14px;box-sizing:border-box;border:var(--ibw) solid var(--inputborder);'></div>
<svg class='r' style='left:1695px;top:745px;' width='80' height='80' viewBox='0 0 80 80'><circle cx='35.4' cy='36' r='27' fill='none' stroke='var(--fg)' stroke-width='4.2'/><path d='M54.5 56 L68.5 70' stroke='var(--fg)' stroke-width='4.2'/></svg>
<div class='t' style='left:1791.6px;top:755.2px;font-size:52px;font-weight:400;color:var(--ph);transform:scaleX(1.0877);'>Название, ИНН, Адес</div>
<div class='r' style='left:3889px;top:715px;width:261px;height:139px;background:var(--btn2);border-radius:16px;'></div>
<div class='t' style='left:3945.8px;top:758.4px;font-size:50px;font-weight:400;color:var(--fg);-webkit-text-stroke:0.9px var(--fg);transform:scaleX(1.0387);'>Найти</div>
<div class='r' style='left:4248px;top:703px;width:577px;height:163px;background:var(--btn2);border-radius:18px;'></div>
<svg class='r' style='left:4310px;top:740px;' width='90' height='90' viewBox='0 0 90 90'><path d='M12 28 H47 M63 28 H76 M12 61 H25 M42 61 H76' stroke='var(--fg)' stroke-width='4.4'/><rect x='47.6' y='20.6' width='14.6' height='14.6' rx='1.5' fill='none' stroke='var(--fg)' stroke-width='4.2'/><rect x='26.2' y='53.6' width='14.6' height='14.6' rx='1.5' fill='none' stroke='var(--fg)' stroke-width='4.2'/></svg>
<div class='t' style='left:4412.6px;top:757.5px;font-size:51px;font-weight:400;color:var(--fg);-webkit-text-stroke:0.9px var(--fg);transform:scaleX(1.1951);'>Фильтры</div>
<svg class='r' style='left:4701px;top:775px;' width='39' height='23' viewBox='0 0 39 23'><path d='M2 2 L19.5 20 L37 2' fill='none' stroke='var(--fg)' stroke-width='4.2' stroke-linecap='butt' stroke-linejoin='miter'/></svg>
<div class='r' style='left:234px;top:960px;width:509px;height:205px;background:var(--thead);border-radius:14px 4px 4px 14px'></div>
<div class='r' style='left:743px;top:960px;width:776px;height:205px;background:var(--thead);border-radius:4px'></div>
<div class='r' style='left:1519px;top:960px;width:489px;height:205px;background:var(--thead);border-radius:4px'></div>
<div class='r' style='left:2008px;top:960px;width:779px;height:205px;background:var(--thead);border-radius:4px'></div>
<div class='r' style='left:2787px;top:960px;width:462px;height:205px;background:var(--thead);border-radius:4px'></div>
<div class='r' style='left:3249px;top:960px;width:500px;height:205px;background:var(--thead);border-radius:4px'></div>
<div class='r' style='left:3749px;top:960px;width:443px;height:205px;background:var(--thead);border-radius:4px'></div>
<div class='r' style='left:4192px;top:960px;width:642px;height:205px;background:var(--thead);border-radius:4px'></div>
<div class='t' style='left:302.8px;top:1039.6px;font-size:46px;font-weight:700;color:var(--fg);transform:scaleX(1.0604);'>№ в ЕФРТА</div>
<svg class='r' style='left:629px;top:1041px;' width='31' height='44' viewBox='0 0 31 44'><path d='M15.5 0 L30.5 18.5 L0.5 18.5 Z' fill='var(--fg)'/><path d='M0.5 25.5 L30.5 25.5 L15.5 43.5 Z' fill='var(--fg)'/></svg>
<div class='t' style='left:813.4px;top:1039.6px;font-size:46px;font-weight:700;color:var(--fg);transform:scaleX(1.0611);'>Название</div>
<svg class='r' style='left:1092px;top:1041px;' width='31' height='44' viewBox='0 0 31 44'><path d='M15.5 0 L30.5 18.5 L0.5 18.5 Z' fill='var(--fg)'/><path d='M0.5 25.5 L30.5 25.5 L15.5 43.5 Z' fill='var(--fg)'/></svg>
<div class='t' style='left:1588.7px;top:1039.6px;font-size:46px;font-weight:700;color:var(--fg);transform:scaleX(1.0925);'>ИНН</div>
<svg class='r' style='left:1743.6px;top:1041px;' width='31' height='44' viewBox='0 0 31 44'><path d='M15.5 0 L30.5 18.5 L0.5 18.5 Z' fill='var(--fg)'/><path d='M0.5 25.5 L30.5 25.5 L15.5 43.5 Z' fill='var(--fg)'/></svg>
<div class='t' style='left:2079.5px;top:1039.6px;font-size:46px;font-weight:700;color:var(--fg);transform:scaleX(1.0825);'>Адрес</div>
<svg class='r' style='left:2279.7px;top:1041px;' width='31' height='44' viewBox='0 0 31 44'><path d='M15.5 0 L30.5 18.5 L0.5 18.5 Z' fill='var(--fg)'/><path d='M0.5 25.5 L30.5 25.5 L15.5 43.5 Z' fill='var(--fg)'/></svg>
<div class='t' style='left:2859.5px;top:1039.6px;font-size:46px;font-weight:700;color:var(--fg);transform:scaleX(1.0916);'>Телефон</div>
<svg class='r' style='left:3125px;top:1041px;' width='31' height='44' viewBox='0 0 31 44'><path d='M15.5 0 L30.5 18.5 L0.5 18.5 Z' fill='var(--fg)'/><path d='M0.5 25.5 L30.5 25.5 L15.5 43.5 Z' fill='var(--fg)'/></svg>
<div class='t' style='left:3318.7px;top:1039.6px;font-size:46px;font-weight:700;color:var(--fg);transform:scaleX(1.1031);'>Email</div>
<svg class='r' style='left:3500.5px;top:1041px;' width='31' height='44' viewBox='0 0 31 44'><path d='M15.5 0 L30.5 18.5 L0.5 18.5 Z' fill='var(--fg)'/><path d='M0.5 25.5 L30.5 25.5 L15.5 43.5 Z' fill='var(--fg)'/></svg>
<div class='t' style='left:3821.6px;top:1039.6px;font-size:46px;font-weight:700;color:var(--fg);transform:scaleX(1.0972);'>Договор</div>
<svg class='r' style='left:4080px;top:1041px;' width='31' height='44' viewBox='0 0 31 44'><path d='M15.5 0 L30.5 18.5 L0.5 18.5 Z' fill='var(--fg)'/><path d='M0.5 25.5 L30.5 25.5 L15.5 43.5 Z' fill='var(--fg)'/></svg>
<div class='t' style='left:4263.9px;top:1039.6px;font-size:46px;font-weight:700;color:var(--fg);transform:scaleX(1.0719);'>Статус договора</div>
<svg class='r' style='left:4720px;top:1041px;' width='31' height='44' viewBox='0 0 31 44'><path d='M15.5 0 L30.5 18.5 L0.5 18.5 Z' fill='var(--fg)'/><path d='M0.5 25.5 L30.5 25.5 L15.5 43.5 Z' fill='var(--fg)'/></svg>
<div class='r' style='left:234px;top:1563.5px;width:4600px;height:3px;background:var(--div);border-radius:0px;'></div>
<div class='r' style='left:234px;top:2028.5px;width:4600px;height:3px;background:var(--div);border-radius:0px;'></div>
<div class='r' style='left:234px;top:2301.0px;width:4600px;height:3px;background:var(--div);border-radius:0px;'></div>
<div class='r' style='left:234px;top:2573.0px;width:4600px;height:3px;background:var(--div);border-radius:0px;'></div>
<div class='r' style='left:234px;top:2974.0px;width:4600px;height:3px;background:var(--div);border-radius:0px;'></div>
<div class='t' style='left:318.5px;top:1340.6px;font-size:48px;font-weight:400;color:var(--fg);transform:scaleX(1.1672);'>PTA 0040209</div>
<div class='t' style='left:814.5px;top:1245.4px;font-size:48px;font-weight:400;color:var(--fg);transform:scaleX(1.0601);'>ОБЩЕСТВО С</div>
<div class='t' style='left:814.5px;top:1310.0px;font-size:48px;font-weight:400;color:var(--fg);transform:scaleX(1.0535);'>ОГРАНИЧЕННОЙ</div>
<div class='t' style='left:814.5px;top:1374.4px;font-size:48px;font-weight:400;color:var(--fg);transform:scaleX(1.0282);'>ОТВЕТСТВЕННОСТЬЮ</div>
<div class='t' style='left:815.5px;top:1438.1px;font-size:48px;font-weight:400;color:var(--fg);transform:scaleX(1.0702);'>“КРЫМПРОФТУР”</div>
<div class='t' style='left:1589.8px;top:1340.6px;font-size:48px;font-weight:400;color:var(--fg);transform:scaleX(1.1130);'>9201007500</div>
<div class='t' style='left:2078.3px;top:1244.8px;font-size:48px;font-weight:400;color:var(--fg);transform:scaleX(1.0954);'>299038, ГОРОД</div>
<div class='t' style='left:2078.4px;top:1309.9px;font-size:48px;font-weight:400;color:var(--fg);transform:scaleX(1.0695);'>СЕВАСТОПОЛЬ, УЛИЦА</div>
<div class='t' style='left:2080.5px;top:1374.2px;font-size:48px;font-weight:400;color:var(--fg);transform:scaleX(1.0801);'>АСТАНА КЕСАЕВА, ДОМ</div>
<div class='t' style='left:2078.4px;top:1437.9px;font-size:48px;font-weight:400;color:var(--fg);transform:scaleX(1.0615);'>6, ОФИС 7</div>
<div class='t' style='left:2856.3px;top:1340.6px;font-size:48px;font-weight:400;color:var(--fg);transform:scaleX(1.0967);'>89622532037</div>
<div class='t' style='left:3319.9px;top:1340.6px;font-size:48px;font-weight:400;color:var(--fg);transform:scaleX(1.0688);'>dev@skillline.ru</div>
<div class='r' style='left:3822px;top:1318.7px;width:177px;height:93px;background:var(--okbg);border-radius:14px;'></div>
<div class='t' style='left:3856.8px;top:1340.6px;font-size:48px;font-weight:400;color:var(--fg);transform:scaleX(1.0624);'>Есть</div>
<div class='r' style='left:4264px;top:1318.7px;width:271px;height:93px;background:var(--okbg);border-radius:14px;'></div>
<div class='t' style='left:4302.0px;top:1340.6px;font-size:48px;font-weight:400;color:var(--fg);transform:scaleX(1.1050);'>Активен</div>
<div class='t' style='left:326.2px;top:1773.6px;font-size:48px;font-weight:400;color:var(--fg);transform:scaleX(1.1146);'>PTA 0040195</div>
<div class='t' style='left:814.5px;top:1677.3px;font-size:48px;font-weight:400;color:var(--fg);transform:scaleX(1.0601);'>ОБЩЕСТВО С</div>
<div class='t' style='left:814.5px;top:1741.0px;font-size:48px;font-weight:400;color:var(--fg);transform:scaleX(1.0535);'>ОГРАНИЧЕННОЙ</div>
<div class='t' style='left:814.5px;top:1805.4px;font-size:48px;font-weight:400;color:var(--fg);transform:scaleX(1.0282);'>ОТВЕТСТВЕННОСТЬЮ</div>
<div class='t' style='left:814.5px;top:1869.7px;font-size:48px;font-weight:400;color:var(--fg);transform:scaleX(1.0680);'>&quot;ИНТЕРЛЮКС&quot;</div>
<div class='t' style='left:1589.9px;top:1773.6px;font-size:48px;font-weight:400;color:var(--fg);transform:scaleX(1.0522);'>7842015258</div>
<div class='t' style='left:2077.3px;top:1646.2px;font-size:48px;font-weight:400;color:var(--fg);transform:scaleX(1.0827);'>192007, Г. САНКТ-</div>
<div class='t' style='left:2077.3px;top:1710.9px;font-size:48px;font-weight:400;color:var(--fg);transform:scaleX(1.0656);'>ПЕТЕРБУРГ, УЛ.</div>
<div class='t' style='left:2080.5px;top:1775.7px;font-size:48px;font-weight:400;color:var(--fg);transform:scaleX(1.0404);'>ДНЕПРОПЕТРОВСКАЯ, Д.</div>
<div class='t' style='left:2078.4px;top:1840.4px;font-size:48px;font-weight:400;color:var(--fg);transform:scaleX(1.0269);'>65, СТР. 1, ПОМЕЩЕНИЕ</div>
<div class='t' style='left:2079.4px;top:1905.2px;font-size:48px;font-weight:400;color:var(--fg);transform:scaleX(1.1069);'>39-Н</div>
<div class='t' style='left:2856.4px;top:1773.6px;font-size:48px;font-weight:400;color:var(--fg);transform:scaleX(1.0578);'>88644741835</div>
<div class='t' style='left:3319.9px;top:1773.6px;font-size:48px;font-weight:400;color:var(--fg);transform:scaleX(1.0688);'>dev@skillline.ru</div>
<div class='r' style='left:3821px;top:1751.7px;width:158px;height:93px;background:var(--nobg);border-radius:14px;'></div>
<div class='t' style='left:3855.9px;top:1773.6px;font-size:48px;font-weight:400;color:var(--fg);transform:scaleX(1.0411);'>Нет</div>
<div class='r' style='left:4264px;top:1751.7px;width:271px;height:93px;background:var(--okbg);border-radius:14px;'></div>
<div class='t' style='left:4302.0px;top:1773.6px;font-size:48px;font-weight:400;color:var(--fg);transform:scaleX(1.1050);'>Активен</div>
<div class='t' style='left:327.8px;top:2142.6px;font-size:48px;font-weight:400;color:var(--fg);transform:scaleX(1.1031);'>PTA 0040183</div>
<div class='t' style='left:813.4px;top:2111.9px;font-size:48px;font-weight:400;color:var(--fg);transform:scaleX(1.0688);'>НЕВЕРОВА ОЛЬГА</div>
<div class='t' style='left:816.6px;top:2177.7px;font-size:48px;font-weight:400;color:var(--fg);transform:scaleX(1.0725);'>АЛЕКСАНДРОВНА</div>
<div class='t' style='left:1589.8px;top:2142.6px;font-size:48px;font-weight:400;color:var(--fg);transform:scaleX(1.0851);'>782064810893</div>
<div class='t' style='left:2077.3px;top:2112.4px;font-size:48px;font-weight:400;color:var(--fg);transform:scaleX(1.0823);'>Г. САНКТ-ПЕТЕРБУРГ, Г.</div>
<div class='t' style='left:2077.2px;top:2176.0px;font-size:48px;font-weight:400;color:var(--fg);transform:scaleX(1.0926);'>ПАВЛОВСК</div>
<div class='t' style='left:2856.4px;top:2142.6px;font-size:48px;font-weight:400;color:var(--fg);transform:scaleX(1.0478);'>88644741837</div>
<div class='t' style='left:3319.9px;top:2142.6px;font-size:48px;font-weight:400;color:var(--fg);transform:scaleX(1.0688);'>dev@skillline.ru</div>
<div class='r' style='left:3822px;top:2120.7px;width:177px;height:93px;background:var(--okbg);border-radius:14px;'></div>
<div class='t' style='left:3856.8px;top:2142.6px;font-size:48px;font-weight:400;color:var(--fg);transform:scaleX(1.0624);'>Есть</div>
<div class='r' style='left:4264px;top:2120.7px;width:271px;height:93px;background:var(--okbg);border-radius:14px;'></div>
<div class='t' style='left:4302.0px;top:2142.6px;font-size:48px;font-weight:400;color:var(--fg);transform:scaleX(1.1050);'>Активен</div>
<div class='t' style='left:325.6px;top:2414.9px;font-size:48px;font-weight:400;color:var(--fg);transform:scaleX(1.1181);'>PTA 0040210</div>
<div class='t' style='left:813.3px;top:2385.1px;font-size:48px;font-weight:400;color:var(--fg);transform:scaleX(1.0868);'>ШПАГИН АНТОН</div>
<div class='t' style='left:813.4px;top:2449.0px;font-size:48px;font-weight:400;color:var(--fg);transform:scaleX(1.0655);'>МАКСИМОВИЧ</div>
<div class='t' style='left:1589.9px;top:2414.9px;font-size:48px;font-weight:400;color:var(--fg);transform:scaleX(1.0737);'>780642363142</div>
<div class='t' style='left:2077.3px;top:2414.7px;font-size:48px;font-weight:400;color:var(--fg);transform:scaleX(1.0602);'>Г. САНКТ-ПЕТЕРБУРГ</div>
<div class='t' style='left:2856.4px;top:2414.9px;font-size:48px;font-weight:400;color:var(--fg);transform:scaleX(1.0620);'>88644741834</div>
<div class='t' style='left:3319.9px;top:2414.9px;font-size:48px;font-weight:400;color:var(--fg);transform:scaleX(1.0688);'>dev@skillline.ru</div>
<div class='r' style='left:3822px;top:2393.0px;width:177px;height:93px;background:var(--okbg);border-radius:14px;'></div>
<div class='t' style='left:3856.8px;top:2414.9px;font-size:48px;font-weight:400;color:var(--fg);transform:scaleX(1.0624);'>Есть</div>
<div class='r' style='left:4264px;top:2393.0px;width:339px;height:93px;background:var(--nobg);border-radius:14px;'></div>
<div class='t' style='left:4298.8px;top:2414.9px;font-size:48px;font-weight:400;color:var(--fg);transform:scaleX(1.0803);'>Не активен</div>
<div class='t' style='left:327.8px;top:2751.2px;font-size:48px;font-weight:400;color:var(--fg);transform:scaleX(1.1031);'>PTA 0040179</div>
<div class='t' style='left:814.5px;top:2655.8px;font-size:48px;font-weight:400;color:var(--fg);transform:scaleX(1.0639);'>ОБЩЕСТВО С</div>
<div class='t' style='left:814.5px;top:2720.9px;font-size:48px;font-weight:400;color:var(--fg);transform:scaleX(1.0535);'>ОГРАНИЧЕННОЙ</div>
<div class='t' style='left:814.5px;top:2784.7px;font-size:48px;font-weight:400;color:var(--fg);transform:scaleX(1.0301);'>ОТВЕТСТВЕННОСТЬЮ</div>
<div class='t' style='left:814.4px;top:2848.5px;font-size:48px;font-weight:400;color:var(--fg);transform:scaleX(1.1015);'>&quot;БИЛИФО&quot;</div>
<div class='t' style='left:1589.9px;top:2751.2px;font-size:48px;font-weight:400;color:var(--fg);transform:scaleX(1.0255);'>7719492474</div>
<div class='t' style='left:2077.4px;top:2657.4px;font-size:48px;font-weight:400;color:var(--fg);transform:scaleX(1.0391);'>121357, Г. МОСКВА, УЛ.</div>
<div class='t' style='left:2077.5px;top:2721.1px;font-size:48px;font-weight:400;color:var(--fg);transform:scaleX(1.0105);'>ВЕРЕЙСКАЯ, Д. 17,</div>
<div class='t' style='left:2077.4px;top:2784.8px;font-size:48px;font-weight:400;color:var(--fg);transform:scaleX(1.0487);'>ПОМЕЩЕНИЕ 1 КОМНАТА</div>
<div class='t' style='left:2078.3px;top:2848.4px;font-size:48px;font-weight:400;color:var(--fg);transform:scaleX(1.0866);'>76</div>
<div class='t' style='left:2856.4px;top:2751.2px;font-size:48px;font-weight:400;color:var(--fg);transform:scaleX(1.0602);'>88644741836</div>
<div class='t' style='left:3319.9px;top:2751.2px;font-size:48px;font-weight:400;color:var(--fg);transform:scaleX(1.0688);'>dev@skillline.ru</div>
<div class='r' style='left:3822px;top:2729.3px;width:177px;height:93px;background:var(--okbg);border-radius:14px;'></div>
<div class='t' style='left:3856.8px;top:2751.2px;font-size:48px;font-weight:400;color:var(--fg);transform:scaleX(1.0624);'>Есть</div>
<div class='r' style='left:4264px;top:2729.3px;width:271px;height:93px;background:var(--okbg);border-radius:14px;'></div>
<div class='t' style='left:4302.0px;top:2751.2px;font-size:48px;font-weight:400;color:var(--fg);transform:scaleX(1.1050);'>Активен</div>
<div class='t' style='left:231.7px;top:3092.4px;font-size:42px;font-weight:400;color:var(--muted);transform:scaleX(1.1043);'>Всего записей:</div>
<div class='t' style='left:232.8px;top:3144.8px;font-size:42px;font-weight:400;color:var(--muted);transform:scaleX(1.0840);'>28</div>
<div class='r' style='left:1740px;top:3071px;width:140px;height:140px;background:var(--pgbtn);border-radius:20px;'></div>
<div class='r' style='left:1910px;top:3071px;width:140px;height:140px;background:var(--pgbtn);border-radius:20px;'></div>
<div class='r' style='left:2290px;top:3071px;width:140px;height:140px;background:var(--pgbtn);border-radius:20px;'></div>
<div class='r' style='left:2460px;top:3071px;width:140px;height:140px;background:var(--pgbtn);border-radius:20px;'></div>
<div class='r' style='left:2630px;top:3071px;width:140px;height:140px;background:var(--pgbtn);border-radius:20px;'></div>
<div class='r' style='left:2800px;top:3071px;width:140px;height:140px;background:var(--pgbtn);border-radius:20px;'></div>
<div class='r' style='left:3011px;top:3071px;width:140px;height:140px;background:var(--pgbtn);border-radius:20px;'></div>
<div class='r' style='left:3181px;top:3071px;width:140px;height:140px;background:var(--pgbtn);border-radius:20px;'></div>
<svg class='r' style='left:1740px;top:3071px;' width='140' height='140' viewBox='0 0 140 140'><path d='M68 55 L52 71 L68 87' fill='none' stroke='var(--fg)' stroke-width='4.2' stroke-linecap='butt'/><path d='M89 55 L73 71 L89 87' fill='none' stroke='var(--fg)' stroke-width='4.2' stroke-linecap='butt'/></svg>
<svg class='r' style='left:1910px;top:3071px;' width='140' height='140' viewBox='0 0 140 140'><path d='M78 55 L61.5 71 L78 87' fill='none' stroke='var(--fg)' stroke-width='4.2' stroke-linecap='butt'/></svg>
<div class='t' style='left:2174.5px;top:3116.4px;font-size:48px;font-weight:400;color:var(--green);-webkit-text-stroke:0.9px var(--green);'>1</div>
<div class='t' style='left:2346.5px;top:3116.4px;font-size:48px;font-weight:400;color:var(--fg);-webkit-text-stroke:0.9px var(--fg);'>2</div>
<div class='t' style='left:2517.0px;top:3116.4px;font-size:48px;font-weight:400;color:var(--fg);-webkit-text-stroke:0.9px var(--fg);'>3</div>
<svg class='r' style='left:2630px;top:3071px;' width='140' height='140' viewBox='0 0 140 140'><rect x='53' y='78' width='7.5' height='8' fill='var(--fg)'/><rect x='66' y='78' width='7.5' height='8' fill='var(--fg)'/><rect x='79' y='78' width='7.5' height='8' fill='var(--fg)'/></svg>
<div class='t' style='left:2841.5px;top:3116.4px;font-size:48px;font-weight:400;color:var(--fg);-webkit-text-stroke:0.9px var(--fg);transform:scaleX(1.0063);'>10</div>
<svg class='r' style='left:3011px;top:3071px;' width='140' height='140' viewBox='0 0 140 140'><path d='M61 55 L77 71 L61 87' fill='none' stroke='var(--fg)' stroke-width='4.2' stroke-linecap='butt'/></svg>
<svg class='r' style='left:3181px;top:3071px;' width='140' height='140' viewBox='0 0 140 140'><path d='M51.5 55 L67 71 L51.5 87' fill='none' stroke='var(--fg)' stroke-width='4.2' stroke-linecap='butt'/><path d='M71.5 55 L87 71 L71.5 87' fill='none' stroke='var(--fg)' stroke-width='4.2' stroke-linecap='butt'/></svg>
<div class='r' style='left:3956px;top:3072px;width:870px;height:140px;background:var(--btn2);border-radius:19px;'></div>
<svg class='r' style='left:4000px;top:3100px;' width='90' height='90' viewBox='0 0 90 90'><path d='M 39.40 23.37 L 39.40 17.00 L 48.60 17.00 L 48.60 23.37 A 18.8 18.8 0 0 1 53.64 25.46 L 58.14 20.95 L 64.65 27.46 L 60.14 31.96 A 18.8 18.8 0 0 1 62.23 37.00 L 68.60 37.00 L 68.60 46.20 L 62.23 46.20 A 18.8 18.8 0 0 1 60.14 51.24 L 64.65 55.74 L 58.14 62.25 L 53.64 57.74 A 18.8 18.8 0 0 1 48.60 59.83 L 48.60 66.20 L 39.40 66.20 L 39.40 59.83 A 18.8 18.8 0 0 1 34.36 57.74 L 29.86 62.25 L 23.35 55.74 L 27.86 51.24 A 18.8 18.8 0 0 1 25.77 46.20 L 19.40 46.20 L 19.40 37.00 L 25.77 37.00 A 18.8 18.8 0 0 1 27.86 31.96 L 23.35 27.46 L 29.86 20.95 L 34.36 25.46 A 18.8 18.8 0 0 1 39.40 23.37 Z' fill='none' stroke='var(--fg)' stroke-width='3.4' stroke-linejoin='miter'/><circle cx='44' cy='41.6' r='7.2' fill='none' stroke='var(--fg)' stroke-width='3.4'/></svg>
<div class='t' style='left:4089.1px;top:3117.4px;font-size:47px;font-weight:400;color:var(--fg);-webkit-text-stroke:0.9px var(--fg);transform:scaleX(1.1332);'>Настроить отображение</div>
<svg class='r' style='left:4721px;top:3132px;' width='34' height='21' viewBox='0 0 34 21'><path d='M2 2 L17.0 18 L32 2' fill='none' stroke='var(--fg)' stroke-width='4.2' stroke-linecap='butt' stroke-linejoin='miter'/></svg>
</div>
</body></html>
